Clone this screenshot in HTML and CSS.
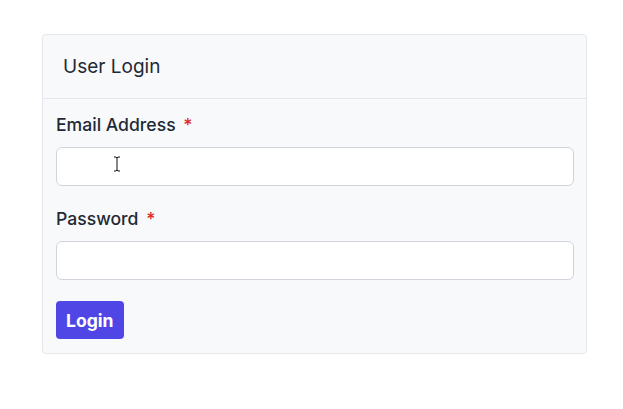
FILE: index.html
```html
<!DOCTYPE html>
<html lang="en">
<head>
<meta charset="utf-8">
<title>User Login</title>
<link rel="stylesheet" href="styles.css">
</head>
<body>
<div class="card">
  <div class="card-header">User Login</div>
  <form class="card-body">
    <div class="field">
      <label class="label" for="email">Email Address <span class="req">*</span></label>
      <div class="input-wrap">
        <input class="input" id="email" type="email">
        <svg class="cursor" width="8" height="16" viewBox="0 0 8 16"><path d="M1 1h2l1 1 1-1h2M4 2v12M1 15h2l1-1 1 1h2" fill="none" stroke="#111" stroke-width="1"/></svg>
      </div>
    </div>
    <div class="field">
      <label class="label" for="password">Password <span class="req">*</span></label>
      <input class="input" id="password" type="password">
    </div>
    <div class="actions">
      <button class="btn" type="button">Login</button>
    </div>
  </form>
</div>
</body>
</html>
```
FILE: styles.css
```css
* { box-sizing: border-box; }
html, body { background: #ffffff; }
body {
  margin: 0;
  padding: 34px 37px 0 42px;
  font-family: Inter, "Noto Sans", "Liberation Sans", sans-serif;
  color: #111827;
}
.card {
  width: 545px;
  background: #f8f9fa;
  border: 1px solid #e5e7eb;
  border-radius: 4px;
}
.card-header {
  padding: 18px 20px 17px 20px;
  font-size: 19px;
  line-height: 28px;
  border-bottom: 1px solid #e5e7eb;
  color: #1f2937;
}
.card-body {
  margin: 0;
  padding: 14px 12px 14px 13px;
  display: flex;
  flex-direction: column;
  gap: 21px;
}
.field {
  display: flex;
  flex-direction: column;
  gap: 10px;
}
.label {
  font-size: 17.6px;
  line-height: 24px;
  font-weight: 500;
  color: #1f2937;
}
.req { color: #dc2626; margin-left: 3px; }
.input-wrap { position: relative; }
.input {
  display: block;
  width: 100%;
  height: 39px;
  background: #ffffff;
  border: 1px solid #d1d5db;
  border-radius: 6px;
  font: inherit;
  padding: 0 12px;
  outline: none;
}
.cursor {
  position: absolute;
  left: 57px;
  top: 9px;
}
.actions { display: flex; }
.btn {
  height: 38px;
  padding: 0 10px;
  background: #4f46e5;
  color: #ffffff;
  border: none;
  border-radius: 4px;
  font-family: inherit;
  font-size: 17.6px;
  font-weight: 700;
}
```
